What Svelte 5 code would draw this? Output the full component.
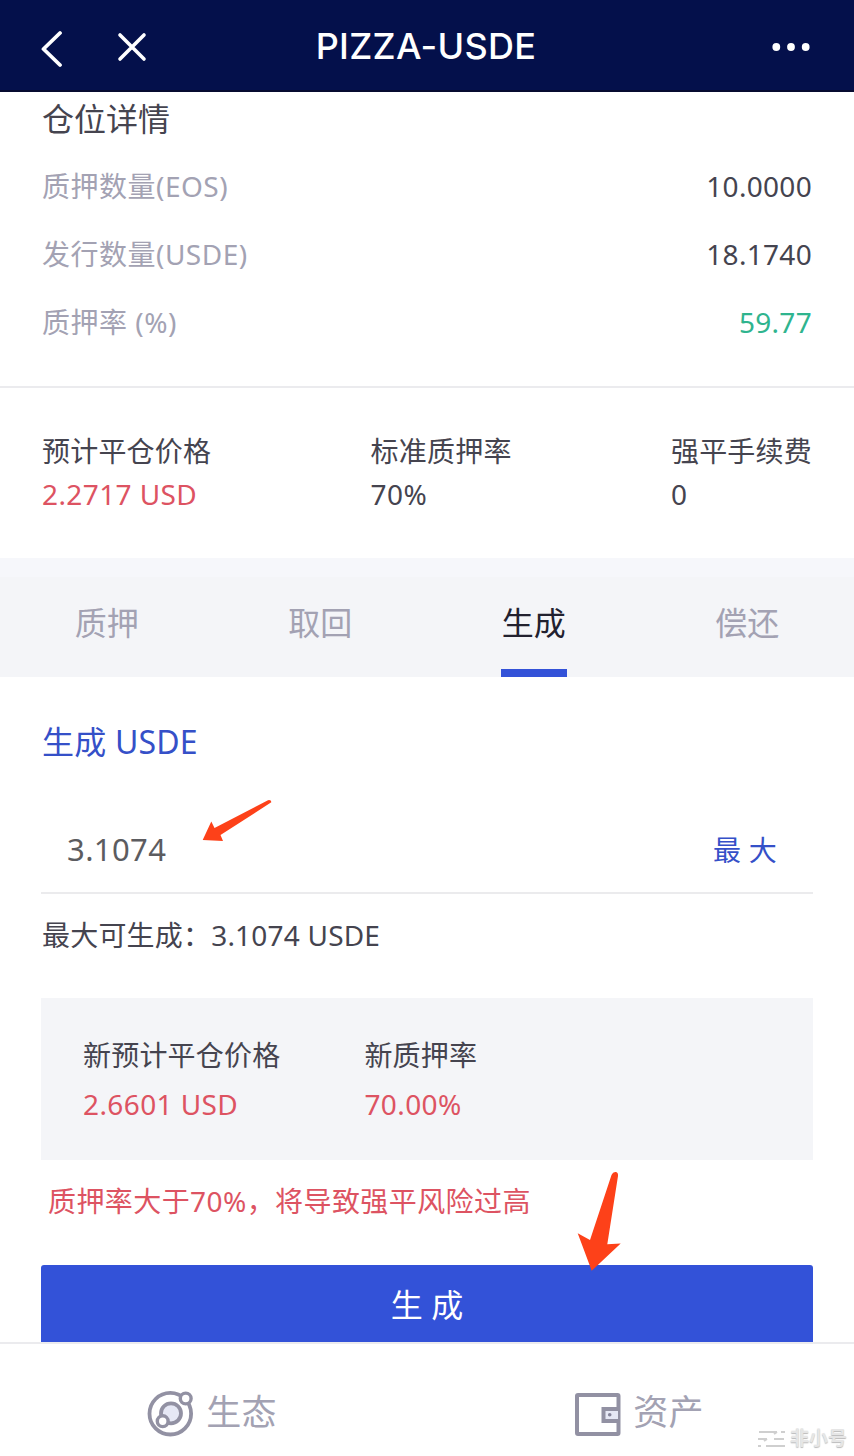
<script>
  let activeTab = $state('generate')
  let amount = $state('3.1074')

  const MAX_AMOUNT = '3.1074'

  const details = [
    { label: '质押数量(EOS)', value: '10.0000' },
    { label: '发行数量(USDE)', value: '18.1740' },
    { label: '质押率 (%)', value: '59.77', tone: 'good' },
  ]

  const stats = [
    { label: '预计平仓价格', value: '2.2717 USD', tone: 'risk' },
    { label: '标准质押率', value: '70%' },
    { label: '强平手续费', value: '0' },
  ]

  const tabs = [
    { id: 'pledge', label: '质押' },
    { id: 'withdraw', label: '取回' },
    { id: 'generate', label: '生成' },
    { id: 'repay', label: '偿还' },
  ]

  const preview = [
    { label: '新预计平仓价格', value: '2.6601 USD' },
    { label: '新质押率', value: '70.00%' },
  ]
</script>

<div class="page">
  <header class="bar">
    <div class="bar-left">
      <svg width="22" height="38" viewBox="0 0 22 38" fill="none" stroke="#fff" stroke-width="3.8" stroke-linecap="round" stroke-linejoin="round">
        <path d="M19 3 2.5 19 19 35" />
      </svg>
      <svg width="30" height="30" viewBox="0 0 30 30" fill="none" stroke="#fff" stroke-width="3.6" stroke-linecap="round">
        <path d="M3 3 27 27M27 3 3 27" />
      </svg>
    </div>
    <h1 class="bar-title">PIZZA-USDE</h1>
    <div class="bar-right">
      <svg width="40" height="10" viewBox="0 0 40 10" fill="#fff">
        <circle cx="5.3" cy="5" r="3.9" /><circle cx="20" cy="5" r="3.9" /><circle cx="34.7" cy="5" r="3.9" />
      </svg>
    </div>
  </header>

  <section class="details">
    <h2>仓位详情</h2>
    {#each details as row (row.label)}
      <div class="row">
        <span class="row-label">{row.label}</span>
        <span class="row-value {row.tone}">{row.value}</span>
      </div>
    {/each}
  </section>

  <section class="stats">
    {#each stats as stat (stat.label)}
      <div class="stat">
        <div>{stat.label}</div>
        <div class="num {stat.tone}">{stat.value}</div>
      </div>
    {/each}
  </section>

  <nav class="tabs">
    {#each tabs as tab (tab.id)}
      <button type="button" class="tab" class:active={activeTab === tab.id} onclick={() => (activeTab = tab.id)}>
        {tab.label}
      </button>
    {/each}
  </nav>

  <section class="form">
    <h3>生成 USDE</h3>
    <div class="field">
      <input type="text" inputmode="decimal" aria-label="生成 USDE" bind:value={amount} />
      <button type="button" class="max" onclick={() => (amount = MAX_AMOUNT)}>最 大</button>
      <svg class="arrow-input" width="72" height="44" viewBox="0 0 72 44" fill="#fd4119">
        <path d="M2.7 41 11.3 22.5 14.5 29 68 1.2Q71.5 .7 71.3 3.3L20.5 36 23 42Z" />
      </svg>
    </div>
    <div class="hint">最大可生成：{MAX_AMOUNT} USDE</div>

    <div class="preview">
      {#each preview as item (item.label)}
        <div class="preview-item">
          <div>{item.label}</div>
          <div class="num risk">{item.value}</div>
        </div>
      {/each}
    </div>

    <p class="warning">质押率大于70%，将导致强平风险过高</p>

    <div class="submit-wrap">
      <button type="button" class="submit">生 成</button>
      <svg class="arrow-submit" width="46" height="102" viewBox="0 0 46 102" fill="#fd4119">
        <path d="M15.7 100.7 1.7 63.2 14 70 35.5 5Q37 1.5 40 2Q42.3 2.5 42 6L31.3 74.3 44.7 73.5Z" />
      </svg>
    </div>
  </section>

  <footer class="nav">
    <a href="#eco" class="nav-item">
      <svg width="48" height="48" viewBox="0 0 48 48" fill="none" stroke="#9291a3" stroke-width="3.8">
        <circle cx="23.3" cy="24.7" r="20.8" />
        <circle cx="24" cy="24.3" r="10" fill="#e6e8f5" />
        <circle cx="38.7" cy="9.5" r="5.4" fill="#fff" stroke-width="3.4" />
        <circle cx="15.7" cy="32.2" r="5.4" fill="#fff" stroke-width="3.4" />
      </svg>
      <span>生态</span>
    </a>
    <a href="#assets" class="nav-item">
      <svg width="48" height="48" viewBox="0 0 48 48" fill="none" stroke="#9291a3" stroke-width="4">
        <rect x="3" y="6" width="41.5" height="39" rx="1" />
        <path d="M44 20H29.5V32H44" fill="#e6e8f5" />
        <circle cx="35.7" cy="25.8" r="1.8" fill="#85849a" stroke="none" />
      </svg>
      <span>资产</span>
    </a>
    <div class="watermark">
      <svg width="30" height="18" viewBox="0 0 30 18" fill="none" stroke="#cfcfcf" stroke-width="2">
        <path d="M2 3H20M24 3H28M1 10H10M17 10H27M1 17H4M9 17H28M20 3 17 5M10 10 7 12" />
      </svg>
      <span>非小号</span>
    </div>
  </footer>
</div>

<style>
  :global(body) { background: #fff; }

  .page {
    width: 854px;
    height: 1456px;
    overflow: hidden;
    display: flex;
    flex-direction: column;
    background: #fff;
    color: #45444f;
    font-family: 'Noto Sans', 'Noto Sans CJK SC', sans-serif;
    font-size: 28px;
    line-height: 40px;
    letter-spacing: .2px;
  }

  h1, h2, h3, p { margin: 0; font-weight: 400; }
  button {
    padding: 0;
    border: none;
    background: none;
    font: inherit;
    letter-spacing: inherit;
    color: inherit;
    cursor: pointer;
  }

  .good { color: #2fb48e; }
  .risk { color: #dd5362; }
  .num { letter-spacing: .4px; }

  .bar {
    display: grid;
    grid-template-columns: 1fr auto 1fr;
    align-items: center;
    height: 92px;
    flex: none;
    box-sizing: border-box;
    padding: 0 43px 0 41px;
    background: #04104b;
    border-bottom: 2px solid #070b30;
  }
  .bar-left { display: flex; align-items: center; gap: 54px; padding-top: 8px; }
  .bar-left svg:last-child { margin-top: -4px; }
  .bar-right { display: flex; justify-content: flex-end; padding-top: 3px; }
  .bar-title {
    color: #fff;
    font-family: Inter, sans-serif;
    font-size: 36px;
    font-weight: 500;
    letter-spacing: .3px;
    padding-top: 2px;
  }

  .details {
    height: 296px;
    flex: none;
    padding: 0 42px;
    border-bottom: 2px solid #ebebee;
    box-sizing: border-box;
  }
  .details h2 { font-size: 32px; line-height: 54px; margin-bottom: 6px; letter-spacing: 0; }
  .row { display: flex; justify-content: space-between; line-height: 68px; }
  .row-label { color: #a3a2b3; letter-spacing: .5px; }
  .row-value { letter-spacing: .3px; }

  .stats {
    display: flex;
    justify-content: space-between;
    height: 170px;
    flex: none;
    box-sizing: border-box;
    padding: 42px 42px 0;
  }
  .stat { line-height: 43px; }

  .tabs {
    display: flex;
    height: 119px;
    flex: none;
    box-sizing: border-box;
    border-top: 19px solid #f6f7fb;
    background: #f4f5f8;
    letter-spacing: 0;
  }
  .tab {
    flex: 1;
    display: flex;
    flex-direction: column;
    align-items: center;
    justify-content: space-between;
    padding-top: 19px;
    color: #a3a2b3;
    font-size: 32px;
    line-height: 54px;
  }
  .tab::after { content: ''; width: 66px; height: 8px; }
  .tab.active { color: #22212f; }
  .tab.active::after { background: #3352d8; }

  .form { padding: 0 41px; flex: none; }
  .form h3 {
    padding: 43px 0 0 1px;
    color: #3550c8;
    font-size: 32px;
    line-height: 44px;
  }
  .field {
    position: relative;
    display: flex;
    align-items: center;
    justify-content: space-between;
    height: 130px;
    box-sizing: border-box;
    padding: 43px 36px 0 26px;
    border-bottom: 2px solid #ebebed;
  }
  .field input {
    width: 300px;
    padding: 0 0 2px;
    border: none;
    outline: none;
    background: none;
    font: inherit;
    font-size: 31px;
    letter-spacing: .4px;
    color: #5c5c60;
  }
  .max { color: #3550c8; }
  .arrow-input { position: absolute; left: 159px; top: 35px; }

  .hint { padding: 21px 0 0 1px; }

  .preview {
    display: flex;
    gap: 84px;
    height: 162px;
    box-sizing: border-box;
    margin-top: 43px;
    padding: 33px 42px 0;
    background: #f4f5f8;
  }
  .preview-item { line-height: 49px; }

  .warning { padding: 21px 7px 0; color: #dd5362; letter-spacing: .42px; }

  .submit-wrap { position: relative; margin-top: 44px; }
  .submit {
    display: block;
    width: 100%;
    height: 77px;
    padding-top: 2px;
    border-radius: 3px 3px 0 0;
    background: #3352d8;
    color: #fff;
    font-size: 32px;
    letter-spacing: 0;
  }
  .arrow-submit { position: absolute; left: 535px; top: -95px; }

  .nav {
    position: relative;
    display: flex;
    flex: 1;
    border-top: 2px solid #ebebee;
    background: #fff;
  }
  .nav-item {
    flex: 1;
    display: flex;
    justify-content: center;
    gap: 11px;
    padding: 45px 3px 0 0;
    color: #a3a2b3;
    font-size: 35px;
    line-height: 46px;
    text-decoration: none;
  }
  .watermark {
    position: absolute;
    right: 7px;
    bottom: 5px;
    display: flex;
    align-items: center;
    gap: 3px;
    color: #e6e6e6;
    font-size: 19px;
    font-weight: 700;
    line-height: 26px;
    letter-spacing: 0;
    text-shadow: 0 1px 1px #bbb;
  }
</style>
